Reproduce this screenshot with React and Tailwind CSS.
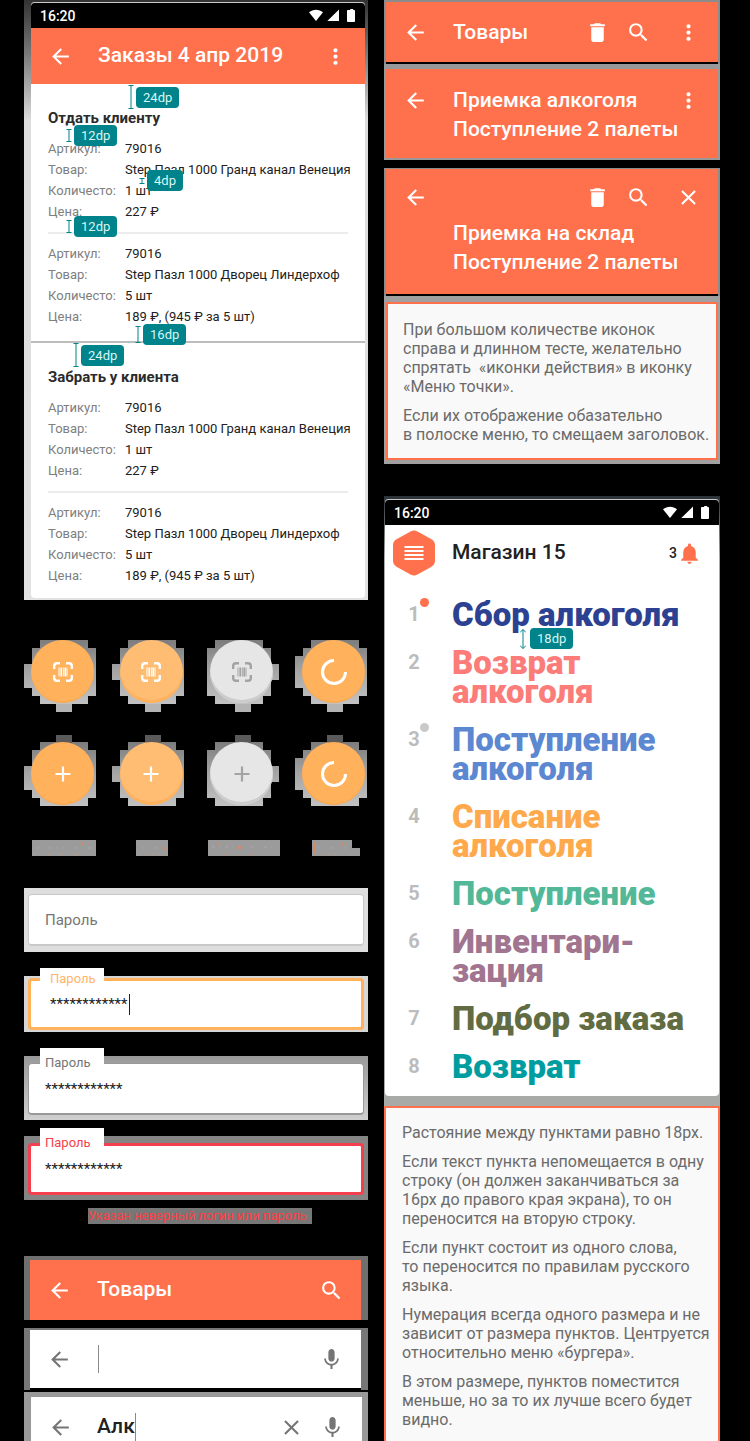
import React from "react";
import {
  MdArrowBack,
  MdClose,
  MdDelete,
  MdMic,
  MdMoreVert,
  MdNotifications,
  MdSearch,
} from "react-icons/md";

function IconButton({ icon: Icon, label, className = "" }) {
  return (
    <button type="button" aria-label={label} className={`shrink-0 ${className}`}>
      <Icon className="size-[25px]" />
    </button>
  );
}

function StatusBar() {
  return (
    <div className="flex h-[26px] items-center justify-between rounded-t border-t border-[#c8c8c8] bg-black pr-2.5 pl-[9px] text-white">
      <span className="text-[14px] leading-5 font-medium">16:20</span>
      <svg viewBox="0 0 46 13" className="h-[13px] w-[46px]" fill="currentColor" aria-hidden="true">
        <path d="M0 3.200C4-.2 10-.2 14 3.200L7 12z" />
        <path d="M30 .6V12H18.300z" />
        <path d="M40 1h1.200V0h3v1H45.200c.5 0 .8.300.8.8V12c0 .6-.3.900-.8.900h-6.400c-.5 0-.8-.3-.8-.9V1.800c0-.5.300-.8.800-.8z" />
      </svg>
    </div>
  );
}

function Ruler({ arrows, className, size }) {
  return (
    <svg viewBox={`0 0 6 ${size}`} width="6" height={size} className={className} fill="none" stroke="#00838a" aria-hidden="true">
      <path d={`M3 .5V${size - 0.5}`} />
      {arrows ? (
        <path d={`M0 3.500 3 .5 6 3.500M0 ${size - 3.5} 3 ${size - 0.5} 6 ${size - 3.5}`} />
      ) : (
        <path d={`M.5 .5H5.500M.5 ${size - 0.5}H5.500`} />
      )}
    </svg>
  );
}

function Spacing({ value, size, arrows, className }) {
  return (
    <div className={`absolute z-10 flex items-center ${arrows ? "gap-1" : "gap-0.5"} ${className}`}>
      <Ruler size={size} arrows={arrows} />
      <span className="rounded bg-[#00838a] px-[7px] text-[13px] leading-[21px] text-[#d9f5f5]">{value}dp</span>
    </div>
  );
}

function Product({ rows }) {
  return (
    <dl className="grid grid-cols-[77px_1fr] text-[13px] leading-[21px]">
      {rows.map(([k, v]) => (
        <React.Fragment key={k}>
          <dt className="text-[#808080]">{k}:</dt>
          <dd className="whitespace-nowrap text-[#212121]">{v}</dd>
        </React.Fragment>
      ))}
    </dl>
  );
}

const venice = [
  ["Артикул", "79016"],
  ["Товар", "Step Пазл 1000 Гранд канал Венеция"],
  ["Количесто", "1 шт"],
  ["Цена", "227 ₽"],
];
const palace = [
  ["Артикул", "79016"],
  ["Товар", "Step Пазл 1000 Дворец Линдерхоф"],
  ["Количесто", "5 шт"],
  ["Цена", "189 ₽, (945 ₽ за 5 шт)"],
];

function OrderGroup({ title, className, children }) {
  return (
    <section className={`relative px-[17px] ${className}`}>
      {children}
      <h2 className="mb-2.5 text-[15px] leading-5 font-bold text-[#2b2b2b]">{title}</h2>
      <Product rows={venice} />
      <hr className="mt-2.5 mb-[9px] border-t-2 border-[#ececec]" />
      <Product rows={palace} />
    </section>
  );
}

function OrdersPhone() {
  return (
    <div className="bg-[#dcdcdc] bg-linear-to-b from-[#333] via-[#dcdcdc] via-20% to-[#e2e2e2] pt-0.5 pr-[3px] pb-0.5 pl-[7px]">
      <div className="overflow-hidden rounded bg-white">
        <StatusBar />
        <header className="flex h-14 items-center bg-[#ff714c] px-[17px] text-white">
          <IconButton icon={MdArrowBack} label="Назад" />
          <h1 className="ml-[25px] flex-1 text-[21px] font-medium">Заказы 4 апр 2019</h1>
          <IconButton icon={MdMoreVert} label="Меню" />
        </header>
        <OrderGroup title="Отдать клиенту" className="border-b-2 border-[#bdbdbd] pt-6 pb-3.5">
          <Spacing value={24} size={24} className="top-px left-[97px]" />
          <Spacing value={12} size={13} className="top-[41px] left-[35px]" />
          <Spacing value={4} size={6} className="top-[86px] left-[108px]" />
          <Spacing value={12} size={13} className="top-[132px] left-[35px]" />
          <Spacing value={16} size={17} className="top-[240px] left-[104px]" />
        </OrderGroup>
        <OrderGroup title="Забрать у клиента" className="pt-6 pb-3">
          <Spacing value={24} size={24} className="top-0 left-[42px]" />
        </OrderGroup>
      </div>
    </div>
  );
}

function ScanIcon() {
  return (
    <svg viewBox="0 0 20 20" className="size-5" fill="none" stroke="currentColor" aria-hidden="true">
      <path strokeWidth="2.400" d="M1.200 7V4C1.200 2.200 2.200 1.200 4 1.200H7M13 1.200h3c1.800 0 2.800 1 2.800 2.800V7M18.800 13v3c0 1.800-1 2.800-2.800 2.800H13M7 18.800H4c-1.800 0-2.800-1-2.800-2.800V13" />
      <path strokeWidth="1" d="M6 5.500v9M14 5.500v9M10.300 5.500v9" />
      <path strokeWidth="1.600" d="M8.200 5.500v9M12.200 5.500v9" />
    </svg>
  );
}

function PlusIcon() {
  return (
    <svg viewBox="0 0 16 16" className="size-4" stroke="currentColor" strokeWidth="2.200" aria-hidden="true">
      <path d="M8 .5v15M.5 8h15" />
    </svg>
  );
}

function SpinnerIcon() {
  return (
    <svg viewBox="0 0 26 26" className="size-[26px]" fill="none" stroke="currentColor" strokeWidth="3" aria-hidden="true">
      <path d="M13 1.500A11.500 11.500 0 1 0 24.500 13" />
    </svg>
  );
}

const shape = {
  a: [[9, 0, 48, 64], [1, 8, 64, 48], [-7, 24, 24, 24]],
  b: [[8, 0, 48, 64], [0, 8, 64, 48], [-8, 24, 24, 16]],
  c: [[5, 0, 48, 64], [-3, 8, 64, 48], [50, 24, 19, 16]],
  d: [[9, 0, 48, 64], [1, 8, 64, 48], [-7, 16, 24, 32]],
};

const states = [
  { id: "a", name: "Обычная", tone: "bg-[#ffb15c] text-white shadow-[inset_0_-1px_0_#f9a653]" },
  { id: "b", name: "Нажатая", tone: "bg-[#ffbd73] text-white shadow-[inset_0_-3px_0_#ffb15c]" },
  { id: "c", name: "Неактивная", tone: "bg-[#e6e6e6] text-[#a3a3a3] shadow-[inset_0_-3px_0_#cccccc]", disabled: true },
  { id: "d", name: "Загрузка", tone: "bg-[#ffb15c] text-white shadow-[inset_0_-1px_0_#f9a653]", busy: true },
];

function RoundButtons({ icon: Icon, nub, className }) {
  return (
    <div className={`grid grid-cols-[89fr_91fr_92fr_62fr] pr-[3px] pl-[7px] ${className}`}>
      {states.map((s) => (
        <div key={s.id} className="relative size-[63px]">
          <svg className="absolute inset-0 size-[63px] overflow-visible" fill="url(#halo)" aria-hidden="true">
            <defs>
              <linearGradient id="halo" gradientUnits="userSpaceOnUse" x1="0" y1="0" x2="0" y2="64">
                <stop offset="0" stopColor="#7c7c7c" />
                <stop offset=".5" stopColor="#a6a6a6" />
                <stop offset="1" stopColor="#c2c2c2" />
              </linearGradient>
            </defs>
            {shape[s.id].map(([x, y, w, h]) => (
              <rect key={`${x} ${y}`} x={x} y={y} width={w} height={h} />
            ))}
            <rect x="25" y={nub} width="16" height="8" fill={nub < 0 ? "#5a5a5a" : "#b4b4b4"} />
          </svg>
          <button
            type="button"
            aria-label={s.name}
            disabled={s.disabled}
            className={`relative flex size-[63px] items-center justify-center rounded-full ${s.tone}`}
          >
            {s.busy ? <SpinnerIcon /> : <Icon />}
          </button>
        </div>
      ))}
    </div>
  );
}

function StateMarks() {
  return (
    <svg viewBox="0 0 344 16" className="mt-[35px] h-4 w-full" aria-hidden="true">
      <path fill="#9b9b9b" d="M8 0h64v16H8zM112 0h32v16h-32zM184 0h72v16h-72zM288 0h40v8h8v8h-48z" />
      <path stroke="#b89684" strokeDasharray="2 7 1 4 3 9" d="M10 14.500H70M114 14.500H142M186 14.500H254M290 14.500H328" />
      <path stroke="#a8a8a8" strokeDasharray="3 4 1 5" d="M12 8H68M118 8H140M188 7H252M294 8H322" />
      <path fill="#d08c68" d="M57 2h3v3h-3zM139 7h2v3h-2zM193 3h2v2h-2zM214 6h3v3h-3zM290 2h2v11h-2zM317 3h2v3h-2z" />
    </svg>
  );
}

function Field({ id, value, caret, wrap, box, label, input }) {
  return (
    <div className={`relative px-1 ${wrap}`}>
      <div className={`flex h-[52px] items-center rounded bg-white ${box}`}>
        <input
          id={id}
          type="text"
          defaultValue={value}
          className={`w-full bg-transparent text-[15px] leading-5 text-[#212121] outline-none ${input}`}
        />
      </div>
      {caret && <span className="absolute top-[18px] left-[105px] h-[21px] w-px bg-[#212121]" />}
      <label
        htmlFor={id}
        className={`absolute -top-2 left-4 flex h-[22px] w-16 items-center bg-white text-[13px] leading-4 ${label}`}
      >
        Пароль
      </label>
    </div>
  );
}

function Fields() {
  return (
    <form className="mt-8">
      <div className="bg-[#dedede] px-1 py-1.5">
        <input
          type="text"
          aria-label="Пароль"
          placeholder="Пароль"
          className="h-[52px] w-full rounded border border-b-2 border-[#c9c9c9] bg-white px-4 text-[15px] outline-none placeholder:text-[#757575]"
        />
      </div>
      <Field
        id="focused"
        value="************"
        caret
        wrap="mt-6 bg-[#d6d6d6] py-0.5"
        box="border-3 border-[#ffb15c]"
        label="pl-2.5 text-[#ffb56b]"
        input="px-[19px]"
      />
      <Field
        id="filled"
        value="************"
        wrap="mt-6 bg-linear-to-b from-[#999] to-[#d0d0d0] pt-[7px] pb-[5px]"
        box="border border-b-2 border-[#999]"
        label="pl-[5px] pt-2 text-[#757575]"
        input="px-4"
      />
      <Field
        id="failed"
        value="************"
        wrap="mt-4 bg-[#858585] pt-[7px] pb-[5px]"
        box="border-3 border-[#f43f4e]"
        label="pl-[5px] pt-2 text-[#f43f4e]"
        input="px-3.5"
      />
      <p className="mt-2 ml-16 w-fit bg-[#777] pr-1.5 text-[13px] leading-4 text-[#fb3f45]">
        Указан неверный логин или пароль
      </p>
    </form>
  );
}

function SearchBars() {
  return (
    <div className="mt-8">
      <div className="bg-[#6f6f6f] pt-1 pr-[7px] pl-1.5">
        <header className="flex h-[60px] items-center bg-[#ff714c] px-[17px] text-white">
          <IconButton icon={MdArrowBack} label="Назад" />
          <h2 className="ml-[25px] flex-1 text-[21px] font-medium">Товары</h2>
          <IconButton icon={MdSearch} label="Поиск" />
        </header>
      </div>
      <div className="mt-2 bg-[#777] pt-0.5 pr-[7px] pl-1.5">
        <div className="flex h-[60px] items-center border-b-2 border-black bg-white px-[17px] text-[#757575]">
          <IconButton icon={MdArrowBack} label="Назад" />
          <span className="ml-[26px] h-7 w-px bg-[#8a8a8a]" />
          <input type="text" aria-label="Поиск" className="min-w-0 flex-1 bg-transparent text-[21px] outline-none" />
          <IconButton icon={MdMic} label="Голосовой ввод" />
        </div>
      </div>
      <div className="mt-0.5 bg-[#999] pt-[5px] pr-1.5 pl-[7px]">
        <div className="flex h-[60px] items-center bg-white px-[17px] text-[#757575]">
          <IconButton icon={MdArrowBack} label="Назад" />
          <input
            type="text"
            aria-label="Поиск товара"
            defaultValue="Алк"
            className="ml-6 w-[38px] bg-transparent text-[21px] font-medium text-[#212121] outline-none"
          />
          <span className="h-7 w-px bg-[#8a8a8a]" />
          <span className="flex-1" />
          <IconButton icon={MdClose} label="Очистить" />
          <IconButton icon={MdMic} label="Голосовой ввод" className="ml-4" />
        </div>
      </div>
    </div>
  );
}

function ToolbarSamples() {
  const title = "text-[21px] leading-[29px] font-medium";
  return (
    <>
      <div className="bg-[#8c8c8c] px-0.5 pt-0.5">
        <header className="flex h-[62px] items-center border-b-2 border-black bg-[#ff714c] px-[17px] text-white">
          <IconButton icon={MdArrowBack} label="Назад" />
          <h2 className={`ml-[25px] flex-1 ${title}`}>Товары</h2>
          <IconButton icon={MdDelete} label="Удалить" />
          <IconButton icon={MdSearch} label="Поиск" className="ml-4" />
          <IconButton icon={MdMoreVert} label="Меню" className="ml-[25px]" />
        </header>
      </div>
      <div className="bg-[#999] px-0.5 pt-[5px] pb-0.5">
        <header className="flex h-[89px] items-start bg-[#ff714c] px-[17px] pt-[17px] text-white">
          <IconButton icon={MdArrowBack} label="Назад" className="pt-0.5" />
          <h2 className={`ml-[25px] flex-1 whitespace-nowrap ${title}`}>
            Приемка алкоголя
            <br />
            Поступление 2 палеты
          </h2>
          <IconButton icon={MdMoreVert} label="Меню" className="-ml-6 pt-0.5" />
        </header>
      </div>
      <div className="mt-2 bg-[#8c8c8c] px-0.5 pt-px">
        <header className="h-[127px] border-b-2 border-black bg-[#ff714c] px-[17px] pt-4 text-white">
          <div className="flex items-center">
            <IconButton icon={MdArrowBack} label="Назад" className="mr-auto" />
            <IconButton icon={MdDelete} label="Удалить" />
            <IconButton icon={MdSearch} label="Поиск" className="ml-4" />
            <IconButton icon={MdClose} label="Закрыть" className="ml-[25px]" />
          </div>
          <h2 className={`mt-[9px] ml-[50px] ${title}`}>
            Приемка на склад
            <br />
            Поступление 2 палеты
          </h2>
        </header>
      </div>
    </>
  );
}

function Note({ paragraphs, className }) {
  return (
    <div className={`flex flex-col gap-2.5 border-2 border-[#ff714c] bg-[#f9f9f9] text-[16px] leading-[19px] text-[#6b6b6b] ${className}`}>
      {paragraphs.map((lines) => (
        <p key={lines[0]} className="whitespace-pre">
          {lines.join("\n")}
        </p>
      ))}
    </div>
  );
}

const toolbarNote = [
  ["При большом количестве иконок", "справа и длинном тесте, желательно", "спрятать  «иконки действия» в иконку", "«Меню точки»."],
  ["Если их отображение обазательно", "в полоске меню, то смещаем заголовок."],
];

const menuNote = [
  ["Растояние между пунктами равно 18px."],
  ["Если текст пункта непомещается в одну", "строку (он должен заканчиваться за", "16px до правого края экрана), то он", "переносится на вторую строку."],
  ["Если пункт состоит из одного слова,", "то переносится по правилам русского", "языка."],
  ["Нумерация всегда одного размера и не", "зависит от размера пунктов. Центруется", "относительно меню «бургера»."],
  ["В этом размере, пунктов поместится", "меньше, но за то их лучше всего будет", "видно."],
];

const menu = [
  { lines: ["Сбор алкоголя"], color: "text-[#2c4191]", dot: "bg-[#ff714c]" },
  { lines: ["Возврат", "алкоголя"], color: "text-[#fb7c79]" },
  { lines: ["Поступление", "алкоголя"], color: "text-[#5c87d1]", dot: "bg-[#c9c9c9]" },
  { lines: ["Списание", "алкоголя"], color: "text-[#ffa94d]" },
  { lines: ["Поступление"], color: "text-[#52b898]" },
  { lines: ["Инвентари-", "зация"], color: "text-[#a1748f]" },
  { lines: ["Подбор заказа"], color: "text-[#626c42]" },
  { lines: ["Возврат"], color: "text-[#009da0]" },
];

function MenuPhone() {
  return (
    <div className="mt-8 bg-[#a8aaa8] bg-linear-to-b from-[#2b3238] to-[#a8aaa8] to-10% px-px pt-[3px] pb-2.5">
      <div className="relative overflow-hidden rounded bg-white pb-[15px]">
        <StatusBar />
        <header className="flex h-14 items-center pr-[17px] pl-2">
          <button type="button" aria-label="Открыть меню" className="shrink-0">
            <svg viewBox="0 0 42 46" className="h-[46px] w-[42px]" aria-hidden="true">
              <path fill="#ff714c" d="M17.500 1.400c2.200-1.200 4.800-1.200 7 0l14 7.900C40.700 10.500 42 12.700 42 15.200v15.600c0 2.500-1.300 4.700-3.500 5.900l-14 7.900c-2.200 1.200-4.800 1.200-7 0l-14-7.900C1.300 35.500 0 33.300 0 30.800V15.200c0-2.500 1.300-4.700 3.500-5.900z" />
              <path stroke="#fff" strokeWidth="1.900" d="M11.500 17h19M11.500 21h19M11.500 25h19M11.500 29h19" />
            </svg>
          </button>
          <h1 className="ml-[17px] flex-1 text-[21px] font-medium text-[#212121]">Магазин 15</h1>
          <button type="button" aria-label="Уведомления: 3" className="flex items-center text-[14px] font-medium text-[#212121]">
            3
            <MdNotifications className="size-[25px] text-[#ff714c]" />
          </button>
        </header>
        <ol className="mt-[19px] flex flex-col gap-[19px]">
          {menu.map((item, i) => (
            <li key={i} className="flex leading-[29px]">
              <span className="relative w-[58px] shrink-0 text-center text-[20px] font-bold text-[#bcbcbc]">
                {i + 1}
                {item.dot && <i className={`absolute -top-0.5 left-[35px] size-[9px] rounded-full ${item.dot}`} />}
              </span>
              <a href="#" className={`ml-[9px] text-[33px] font-black whitespace-pre ${item.color}`}>
                {item.lines.join("\n")}
              </a>
            </li>
          ))}
        </ol>
        <Spacing value={18} size={20} arrows className="top-[129px] left-[135px]" />
      </div>
    </div>
  );
}

export default function App() {
  return (
    <main className="h-screen overflow-hidden bg-black pr-[30px] pl-6 font-['Roboto',sans-serif]">
      <div className="grid grid-cols-[344fr_336fr] items-start gap-4">
        <div className="min-w-0">
          <OrdersPhone />
          <RoundButtons icon={ScanIcon} nub={64} className="mt-10" />
          <RoundButtons icon={PlusIcon} nub={-7} className="mt-[39px]" />
          <StateMarks />
          <Fields />
          <SearchBars />
        </div>
        <div className="min-w-0">
          <ToolbarSamples />
          <div className="bg-[#a0a0a0] px-0.5 pt-1.5 pb-1">
            <Note paragraphs={toolbarNote} className="px-[15px] pt-4 pb-3.5" />
          </div>
          <MenuPhone />
          <Note paragraphs={menuNote} className="px-4 pt-[15px] pb-10" />
        </div>
      </div>
    </main>
  );
}
